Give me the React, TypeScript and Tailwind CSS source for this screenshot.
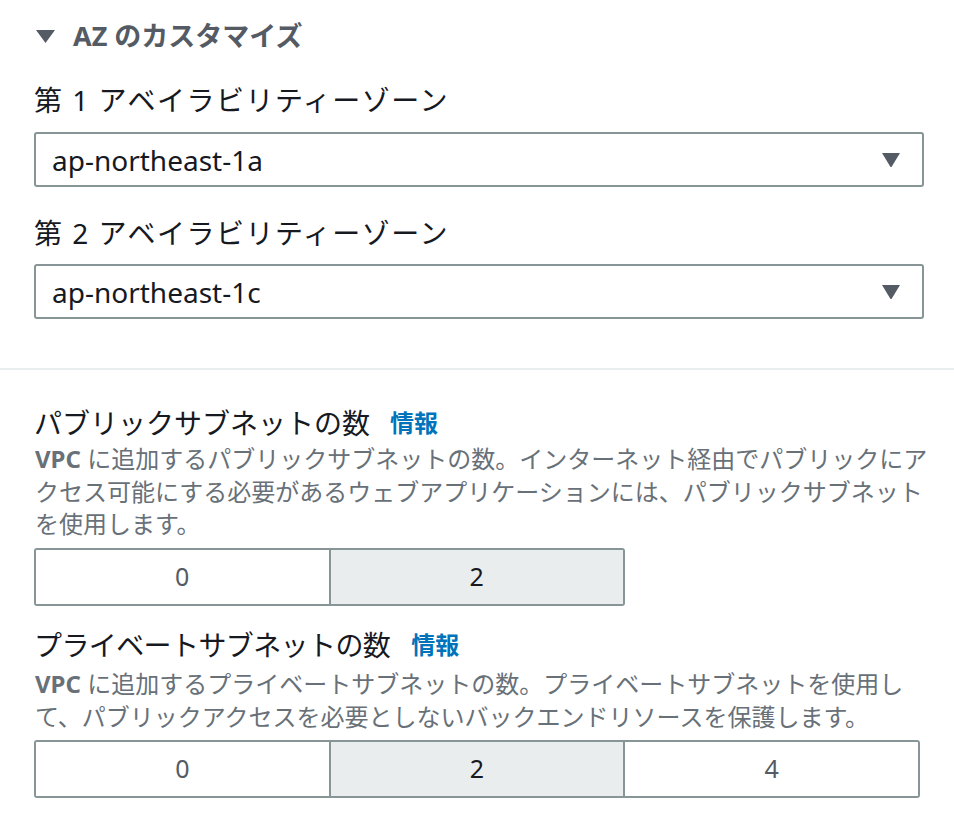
import React from 'react'

const font = "font-['Noto_Sans','Noto_Sans_CJK_JP',sans-serif]"

function Caret({ className }: { className?: string }) {
  return (
    <svg viewBox="0 0 20 16" className={className} aria-hidden>
      <path d="M1 1 H19 L10.8 14.6 Q10 15.6 9.2 14.6 Z" fill="#545b64" />
    </svg>
  )
}

function Select({ value }: { value: string }) {
  return (
    <div className="flex h-[55px] items-center justify-between rounded-[3px] border-2 border-[#879596] bg-white pl-4 pr-[21px]">
      <span className="text-[28px] leading-none text-[#16191f]">{value}</span>
      <Caret className="h-4 w-5" />
    </div>
  )
}

function Segmented({ options, selected, width }: { options: string[]; selected: string; width: string }) {
  return (
    <div className={`flex h-[58px] overflow-hidden rounded-[3px] border-2 border-[#879596] ${width}`}>
      {options.map((o, i) => (
        <div
          key={o}
          className={`flex flex-1 items-center justify-center text-[25px] ${
            i > 0 ? 'border-l-2 border-[#879596]' : ''
          } ${o === selected ? 'bg-[#eaeded] text-[#16191f]' : 'bg-white text-[#545b64]'}`}
        >
          {o}
        </div>
      ))}
    </div>
  )
}

export default function App() {
  return (
    <div className={`min-h-[814px] w-[954px] bg-white ${font}`}>
      {/* AZ customize */}
      <div className="pl-[34px] pr-[30px] pt-[18px]">
        <div className="flex h-[36px] items-center">
          <svg viewBox="0 0 19 13" className="ml-[2px] h-[13px] w-[19px]" aria-hidden>
            <path d="M0 0 H19 L9.5 13 Z" fill="#545b64" />
          </svg>
          <span className="ml-[18px] text-[27px] font-bold text-[#545b64]">AZ のカスタマイズ</span>
        </div>

        <div className="mt-[26px] text-[28px] leading-[40px] tracking-[1.5px] text-[#16191f]">第 1 アベイラビリティーゾーン</div>
        <div className="mt-[12px]">
          <Select value="ap-northeast-1a" />
        </div>

        <div className="mt-[26px] text-[28px] leading-[40px] tracking-[1.5px] text-[#16191f]">第 2 アベイラビリティーゾーン</div>
        <div className="mt-[11px]">
          <Select value="ap-northeast-1c" />
        </div>
      </div>

      <div className="mt-[49px] border-t-2 border-[#eaeded]" />

      {/* Subnets */}
      <div className="pl-[34px] pr-[30px] pt-[33px]">
        <div className="flex items-center text-[28px] leading-[40px] text-[#16191f]">
          パブリックサブネットの数
          <a href="#" className="ml-[20px] text-[24px] font-bold text-[#0073bb]">
            情報
          </a>
        </div>
        <p className="ml-px whitespace-nowrap text-[24px] leading-[32.5px] text-[#687078]">
          <span className="font-bold">VPC</span> に追加するパブリックサブネットの数。インターネット経由でパブリックにア
          <br />
          クセス可能にする必要があるウェブアプリケーションには、パブリックサブネット
          <br />
          を使用します。
        </p>
        <div className="mt-[7px]">
          <Segmented options={['0', '2']} selected="2" width="w-[591px]" />
        </div>

        <div className="mt-[19px] flex items-center text-[28px] leading-[40px] text-[#16191f]">
          <span className="tracking-[-0.6px]">プライベートサブネットの数</span>
          <a href="#" className="ml-[21px] text-[24px] font-bold text-[#0073bb]">
            情報
          </a>
        </div>
        <p className="ml-px mt-[2px] whitespace-nowrap text-[24px] leading-[33px] text-[#687078]">
          <span className="font-bold">VPC</span> に追加するプライベートサブネットの数。プライベートサブネットを使用し
          <br />
          て、パブリックアクセスを必要としないバックエンドリソースを保護します。
        </p>
        <div className="mt-[7px]">
          <Segmented options={['0', '2', '4']} selected="2" width="w-[886px]" />
        </div>
      </div>
    </div>
  )
}
